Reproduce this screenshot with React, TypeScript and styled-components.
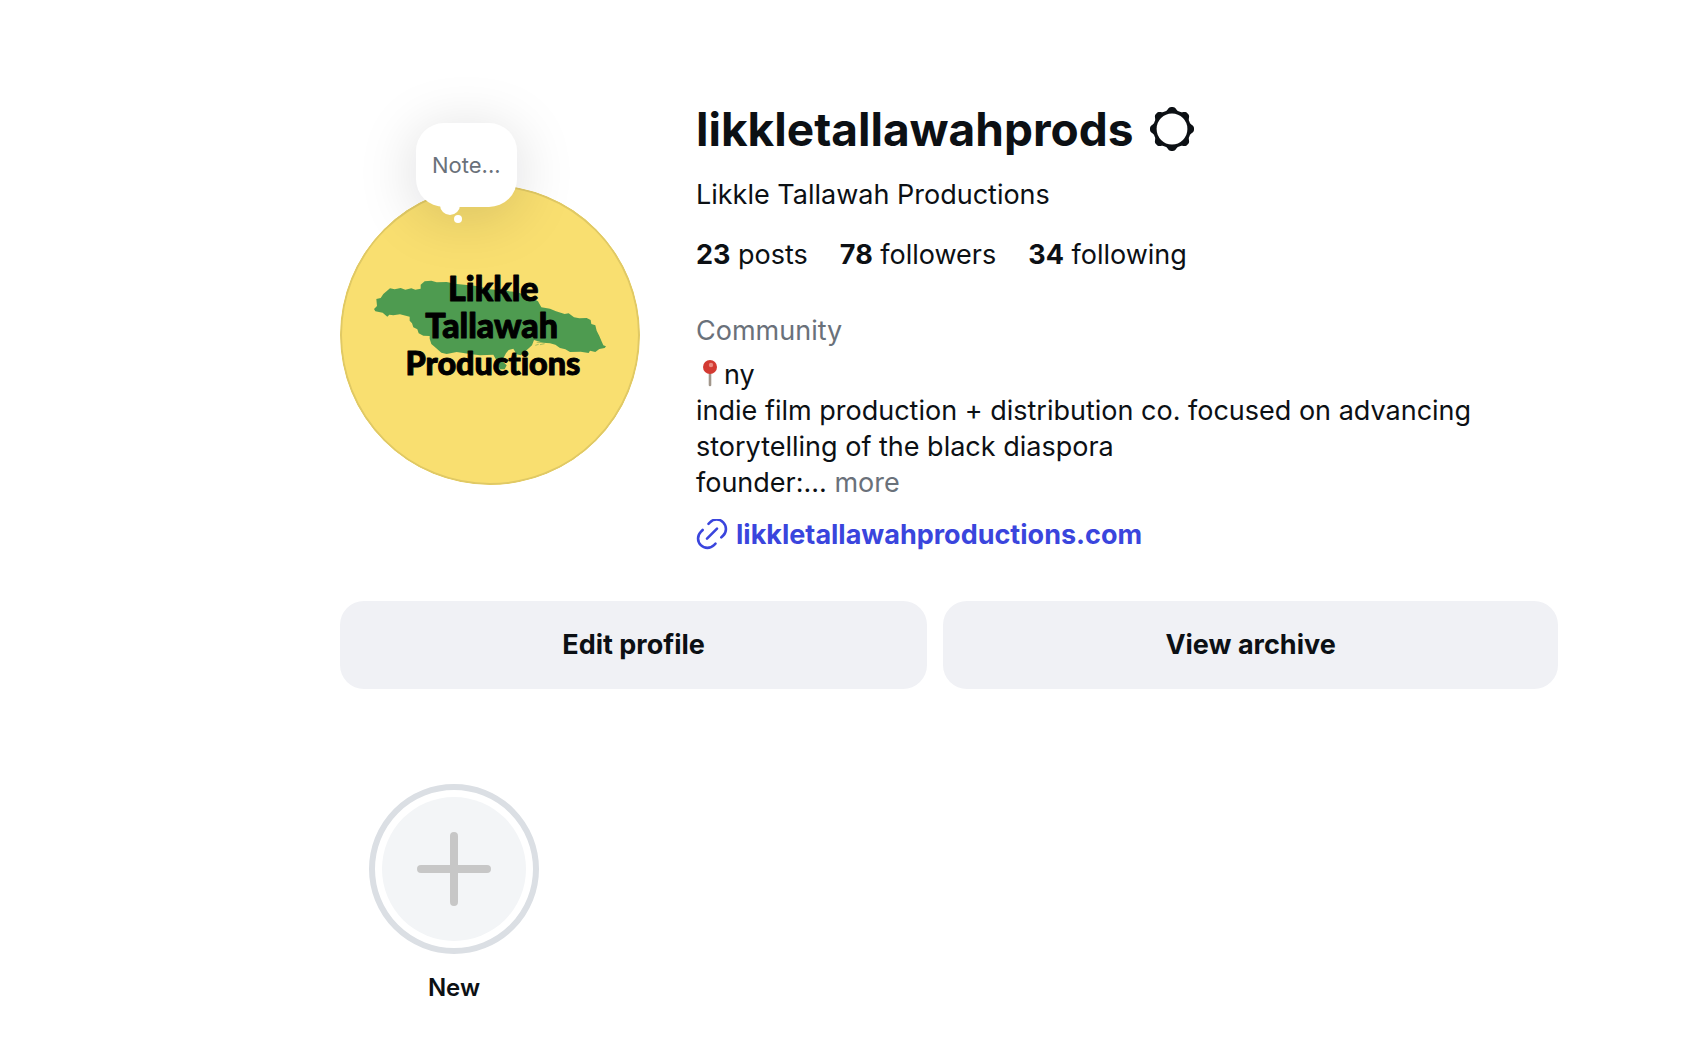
import React from "react";
import styled, { createGlobalStyle } from "styled-components";

const GlobalStyle = createGlobalStyle`
  *, *::before, *::after { box-sizing: border-box; }
  body {
    margin: 0;
    background: #fff;
    color: #0c1014;
    font-family: Inter, "Liberation Sans", sans-serif;
    font-size: 27px;
    line-height: 36px;
    -webkit-font-smoothing: antialiased;
  }
  h1, p, ul { margin: 0; padding: 0; }
  button { font: inherit; color: inherit; border: 0; padding: 0; background: none; cursor: pointer; }
  svg { display: block; }
`;

const Page = styled.main`
  padding: 105px 142px 48px 340px;
`;

const Header = styled.header`
  display: flex;
  align-items: flex-start;
  gap: 56px;
`;

const AvatarArea = styled.div`
  position: relative;
  flex: none;
  width: 300px;
  padding-top: 80px;
`;

const AvatarButton = styled.button`
  display: block;
  width: 300px;
  height: 300px;
  border-radius: 50%;
  overflow: hidden;
`;

const NoteBubble = styled.button`
  && {
    position: absolute;
    top: 18px;
    left: 76px;
    height: 84px;
    padding: 0 16px;
    border-radius: 28px;
    background: #fff;
    color: #6a717a;
    font-size: 22px;
    line-height: 28px;
    box-shadow: 0 8px 60px rgba(12, 16, 20, 0.15);
  }
  &::before,
  &::after {
    content: "";
    position: absolute;
    border-radius: 50%;
    background: #fff;
  }
  &::before {
    width: 20px;
    height: 20px;
    left: 24px;
    bottom: -8px;
  }
  &::after {
    width: 8px;
    height: 8px;
    left: 38px;
    bottom: -16px;
  }
`;

const Info = styled.section`
  flex: 1;
  min-width: 0;
`;

const NameRow = styled.div`
  display: flex;
  align-items: center;
  gap: 16px;
  height: 48px;
  margin-bottom: 24px;
`;

const Username = styled.h1`
  font-size: 46px;
  line-height: 48px;
  font-weight: 700;
`;

const Stats = styled.ul`
  display: flex;
  gap: 32px;
  margin: 24px 0 40px;
  list-style: none;
`;

const Count = styled.strong`
  font-weight: 700;
`;

const Category = styled.p`
  margin-bottom: 8px;
  color: #6a717a;
`;

const BioLine = styled.p`
  display: flex;
  align-items: center;
`;

const Bio = styled.p`
  max-width: 800px;
`;

const MoreButton = styled.button`
  && { color: #6a717a; }
`;

const SiteLink = styled.a`
  display: flex;
  align-items: center;
  gap: 8px;
  width: fit-content;
  margin-top: 16px;
  color: #3a45dd;
  font-weight: 700;
  text-decoration: none;
`;

const Actions = styled.div`
  display: flex;
  gap: 16px;
  margin-top: 48px;
`;

const ActionButton = styled.button`
  && {
    flex: 1 1 auto;
    height: 88px;
    border-radius: 24px;
    background: #f0f1f5;
    font-weight: 700;
  }
`;

const Highlights = styled.section`
  display: flex;
  margin-top: 95px;
  padding-left: 29px;
`;

const Highlight = styled.button`
  display: flex;
  flex-direction: column;
  align-items: center;
  gap: 18px;
`;

const Ring = styled.span`
  display: block;
  padding: 7px;
  border: 6px solid #dbdfe4;
  border-radius: 50%;
`;

const RingFill = styled.span`
  display: grid;
  place-items: center;
  width: 144px;
  height: 144px;
  border-radius: 50%;
  background: #f3f5f7;
`;

const HighlightLabel = styled.span`
  font-size: 24px;
  line-height: 32px;
  font-weight: 600;
`;

const LogoText = styled.text`
  font-family: Lato, "Open Sans", sans-serif;
  font-weight: 900;
  font-variant-ligatures: none;
  text-anchor: middle;
  stroke: #000;
  stroke-width: 3px;
  stroke-linejoin: round;
`;

const Logo = () => (
  <svg width="300" height="300" viewBox="30 285 900 900" role="img" aria-label="Likkle Tallawah Productions logo">
    <circle cx="480" cy="735" r="450" fill="#f9df70" />
    <path
      fill="#4e9b50"
      d="M132 657L141 648L139 627L152 624L160 612L180 595L194 598L212 594L226 599L244 595L256 599L272 596V584L284 574L304 572L320 577L350 576L380 582L440 588L480 598L560 606L600 620L624 634L634 652L660 656L678 664L704 672L716 670L732 682L748 685L770 684L782 690L784 702L796 706L800 722L808 738L814 752L820 766L828 769L824 774L808 777L796 786L780 782L776 789L752 785L720 786L706 778L690 774L676 764L660 760L640 758L624 754L612 750L606 766L588 782L572 796L560 793L550 776L536 780L528 790L516 812L530 826L524 838L510 838L500 812L490 794L450 796L420 792L380 786L350 792L334 788L318 774L304 762L299 746V738L280 737L266 730L262 718L250 712L246 700L239 692V680L210 673L190 676L178 674L172 680L158 668L136 664Z"
    />
    <path d="M616 766l10-3M630 764l14-3M620 757l22 1" stroke="#7dac55" strokeWidth="2" />
    <LogoText x="490" y="633" fontSize="102">Likkle</LogoText>
    <LogoText x="485" y="745" fontSize="102">Tallawah</LogoText>
    <LogoText x="489" y="856" fontSize="97">Productions</LogoText>
    <circle cx="480" cy="735" r="447" fill="none" stroke="#e0c965" strokeWidth="6" />
  </svg>
);

// Eight flat-topped teeth with smooth valleys between them.
const gearOutline = Array.from({ length: 160 }, (_, i) => {
  const angle = (i / 160) * Math.PI * 2;
  const wave = (1 + Math.cos(angle * 8)) / 2;
  const radius = 18.9 + 3.1 * wave * wave * (3 - 2 * wave);
  return `${(22 + radius * Math.cos(angle)).toFixed(2)},${(22 + radius * Math.sin(angle)).toFixed(2)}`;
}).join(" ");

const GearIcon = () => (
  <svg width="44" height="44" viewBox="0 0 44 44" aria-hidden="true">
    <polygon points={gearOutline} fill="#0c1014" />
    <circle cx="22" cy="22" r="15.400" fill="#fff" />
  </svg>
);

const PinIcon = () => (
  <svg width="28" height="32" viewBox="0 0 28 32" role="img" aria-label="Location">
    <path d="M14 14v12" stroke="#a1968b" strokeWidth="2.6" strokeLinecap="round" />
    <circle cx="14" cy="8" r="7" fill="#d33a32" />
    <circle cx="15" cy="6" r="2.2" fill="#ec8a80" />
  </svg>
);

const LinkIcon = () => (
  <svg width="32" height="32" viewBox="0 0 32 32" fill="none" stroke="#3a45dd" strokeWidth="2.6" strokeLinecap="round" aria-hidden="true">
    <path d="M12.500 4.800L14 3.300A9.300 9.300 0 0 1 27.200 16.500L25.300 18.400" />
    <path d="M19.500 24.600L18 26.100A9.300 9.300 0 0 1 4.800 12.900L6.700 11" />
    <path d="M11 19.700L21 9.700" />
  </svg>
);

const PlusIcon = () => (
  <svg width="74" height="74" viewBox="0 0 74 74" stroke="#c7c7c7" strokeWidth="8" strokeLinecap="round" aria-hidden="true">
    <path d="M37 4v66M4 37h66" />
  </svg>
);

const stats = [
  { count: 23, label: "posts" },
  { count: 78, label: "followers" },
  { count: 34, label: "following" },
];

export default function App() {
  return (
    <>
      <GlobalStyle />
      <Page>
        <Header>
          <AvatarArea>
            <AvatarButton type="button" aria-label="Change profile photo">
              <Logo />
            </AvatarButton>
            <NoteBubble type="button">Note...</NoteBubble>
          </AvatarArea>
          <Info>
            <NameRow>
              <Username>likkletallawahprods</Username>
              <button type="button" aria-label="Options">
                <GearIcon />
              </button>
            </NameRow>
            <p>Likkle Tallawah Productions</p>
            <Stats>
              {stats.map(({ count, label }) => (
                <li key={label}>
                  <Count>{count}</Count> {label}
                </li>
              ))}
            </Stats>
            <Category>Community</Category>
            <BioLine>
              <PinIcon />
              ny
            </BioLine>
            <Bio>
              indie film production + distribution co. focused on advancing storytelling of the black diaspora
              <br />
              founder:... <MoreButton type="button">more</MoreButton>
            </Bio>
            <SiteLink href="#site">
              <LinkIcon />
              likkletallawahproductions.com
            </SiteLink>
          </Info>
        </Header>
        <Actions>
          <ActionButton type="button">Edit profile</ActionButton>
          <ActionButton type="button">View archive</ActionButton>
        </Actions>
        <Highlights>
          <Highlight type="button">
            <Ring>
              <RingFill>
                <PlusIcon />
              </RingFill>
            </Ring>
            <HighlightLabel>New</HighlightLabel>
          </Highlight>
        </Highlights>
      </Page>
    </>
  );
}
